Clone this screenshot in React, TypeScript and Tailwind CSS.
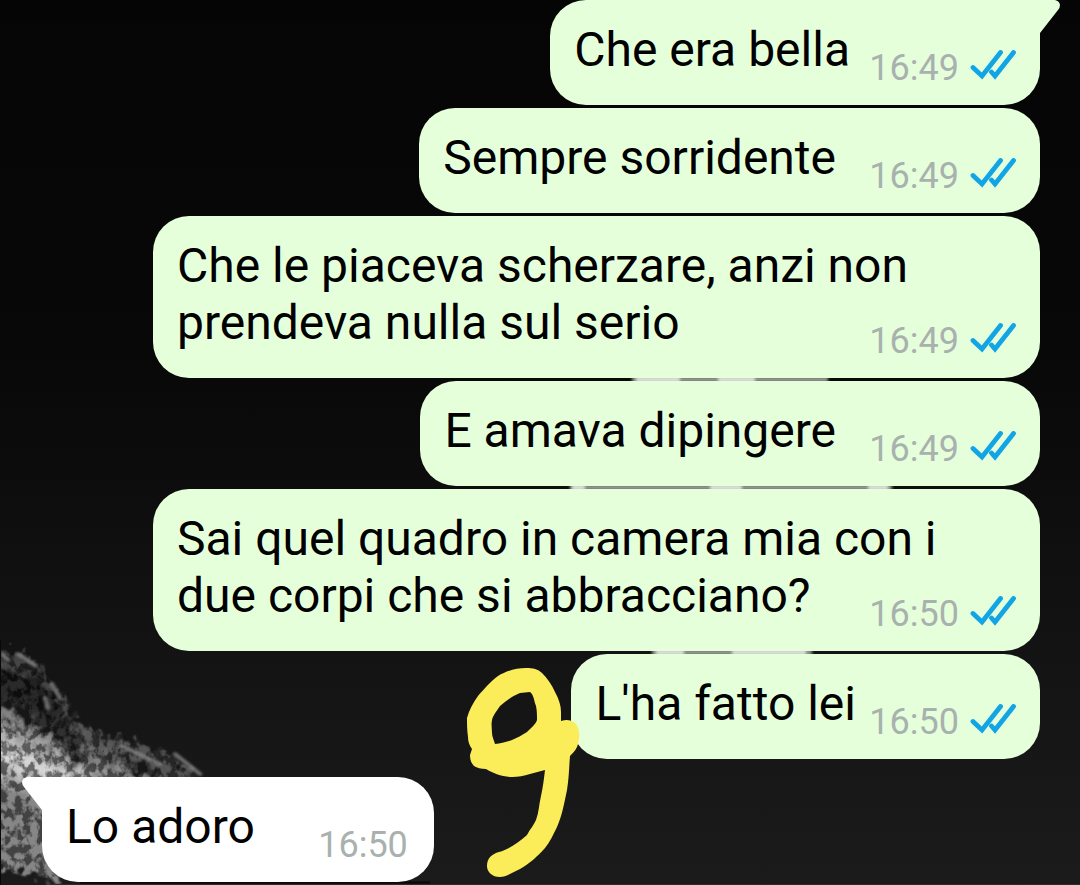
type Message = {
  text: string;
  time: string;
  sent: boolean;
  tail?: boolean;
  room: string;
};

const messages: Message[] = [
  { text: "Che era bella", time: "16:49", sent: true, tail: true, room: "pr-[166px]" },
  { text: "Sempre sorridente", time: "16:49", sent: true, room: "pr-[180px]" },
  { text: "Che le piaceva scherzare, anzi non prendeva nulla sul serio", time: "16:49", sent: true, room: "" },
  { text: "E amava dipingere", time: "16:49", sent: true, room: "pr-[180px]" },
  { text: "Sai quel quadro in camera mia con i due corpi che si abbracciano?", time: "16:50", sent: true, room: "" },
  { text: "L'ha fatto lei", time: "16:50", sent: true, room: "pr-[160px]" },
  { text: "Lo adoro", time: "16:50", sent: false, tail: true, room: "pr-[155px]" },
];

function ReadTicks() {
  return (
    <svg
      role="img"
      aria-label="Letto"
      className="mt-[3px] h-[30px] w-[46px]"
      viewBox="0 0 46 30"
      fill="none"
      stroke="#12a5e6"
      strokeWidth="4.8"
      strokeLinecap="round"
    >
      <path d="M3 17.5 L12 26 L30.5 2.5" />
      <path d="M21.5 22 L25 26 L43.5 2.5" />
    </svg>
  );
}

function Bubble({ message }: { message: Message }) {
  const { text, time, sent, tail, room } = message;
  const side = sent ? "self-end bg-[#e5ffdb]" : "mt-[15px] self-start bg-white";
  const corner = tail ? (sent ? "rounded-tr-none" : "rounded-tl-none") : "";
  return (
    <li className={`relative grid max-w-[887px] rounded-[36px] px-6 pt-[21px] pb-[27px] ${side} ${corner}`}>
      {tail && (
        <svg
          aria-hidden="true"
          viewBox="0 0 22 34"
          className={sent ? "absolute top-0 -right-[21px] h-[34px] w-[22px]" : "absolute top-0 -left-[21px] h-[34px] w-[22px] -scale-x-100"}
          fill={sent ? "#e5ffdb" : "#ffffff"}
        >
          <path d="M0 0 H16 Q20.5 1 21 5 Q21 7.5 19 10 L1 33 V34 H0 Z" />
        </svg>
      )}
      <p className={`[grid-area:1/1] text-[48px] leading-[57px] text-black ${room}`}>{text}</p>
      <div className={`-mb-[11px] flex items-start gap-[11px] self-end justify-self-end [grid-area:1/1] ${sent ? "" : "mr-0.5"}`}>
        <time className="text-[36px] leading-[42px] text-[#a9b1ae]">{time}</time>
        {sent && <ReadTicks />}
      </div>
    </li>
  );
}

function Wallpaper() {
  return (
    <svg aria-hidden="true" className="absolute inset-0 h-full w-full" viewBox="0 0 1080 885" preserveAspectRatio="xMinYMin slice">
      <defs>
        <linearGradient id="night" x1="0" y1="0" x2="0" y2="1">
          <stop offset="0" stopColor="#050505" />
          <stop offset="0.4" stopColor="#080808" />
          <stop offset="0.7" stopColor="#121212" />
          <stop offset="1" stopColor="#1b1b1b" />
        </linearGradient>
        <linearGradient id="slope" gradientUnits="userSpaceOnUse" x1="85" y1="680" x2="25" y2="800">
          <stop offset="0" stopColor="#383838" />
          <stop offset="0.4" stopColor="#585858" />
          <stop offset="0.56" stopColor="#8c8c8c" />
          <stop offset="0.75" stopColor="#d0d0d0" />
          <stop offset="1" stopColor="#808080" />
        </linearGradient>
        <filter id="rock" x="-10%" y="-10%" width="120%" height="120%">
          <feTurbulence type="fractalNoise" baseFrequency="0.13 0.11" numOctaves="3" seed="8" result="noise" />
          <feColorMatrix in="noise" type="matrix" values="5 0 0 0 -2  5 0 0 0 -2  5 0 0 0 -2  0 0 0 0 1" result="grain" />
          <feDisplacementMap in="SourceGraphic" in2="noise" scale="30" xChannelSelector="G" yChannelSelector="B" result="rough" />
          <feGaussianBlur in="rough" stdDeviation="1.2" result="smooth" />
          <feComposite in="smooth" in2="grain" operator="arithmetic" k1="0.85" k2="0.25" result="lit" />
          <feComposite in="lit" in2="smooth" operator="in" />
        </filter>
        <filter id="soft">
          <feGaussianBlur stdDeviation="1.6 0.8" />
        </filter>
      </defs>
      <rect width="1080" height="885" fill="url(#night)" />
      <g filter="url(#rock)">
        <path
          fill="url(#slope)"
          d="M-20 645 L22 652 L45 672 L62 695 L80 722 L104 735 L140 742 L170 754 L202 778 L190 800 L80 820 L60 884 L40 880 L12 872 L-20 864 Z"
        />
        <path fill="#0c0c0c" d="M-10 668 L40 676 L66 712 L86 752 L84 772 L50 734 L10 712 L-10 706 Z M120 752 L148 760 L164 776 L134 776 Z" opacity="0.6" />
      </g>
      <g fill="none" stroke="#858585" filter="url(#soft)" strokeWidth="4" strokeLinecap="round" opacity="0.8">
        <path d="M2 708 L24 728 M18 654 L36 666 M52 684 L60 698 M45 698 L48 708 M3 655 L8 660 M122 746 L160 764 M175 754 L200 774" />
      </g>
      <path d="M0 640 V885" stroke="#080808" strokeWidth="2" />
      <path d="M80 882.5 H430" stroke="#080808" strokeWidth="2" />
      <path d="M50 884.5 H1080" stroke="#2e2a2b" />
      <g filter="url(#soft)" fill="#8e938b">
        <path d="M632 377 H828 V382 H632 Z M570 485 H892 V490 H570 Z M652 650 H812 V655 H652 Z" />
      </g>
      <g filter="url(#soft)" fill="#d9ddd5">
        <path d="M636 377 H680 V382 H636 Z M718 377 H755 V382 H718 Z" />
        <path d="M572 485 H585 V490 H572 Z M710 485 H742 V490 H710 Z M868 485 H888 V490 H868 Z" />
        <path d="M656 650 H684 V655 H656 Z M732 650 H806 V655 H732 Z" />
      </g>
    </svg>
  );
}

function Scribble() {
  return (
    <svg aria-hidden="true" viewBox="0 0 114 210" className="absolute top-[668px] left-[466px] h-[210px] w-[114px]">
      <path
        fill="#fbec5a"
        fillRule="evenodd"
        d="M60 0 C67 0 72 1 76 5 C81 10 86 17 89 24 C93 31 95 38 95 44 L95 53 C101 51 105 52 109 55 C114 60 114 69 112 76 C111 81 107 85 104 88 C103 100 103 110 101 122 C98 136 96 148 91 159 C87 167 84 174 79 180 C72 188 63 196 54 201 C47 204 40 209 34 209 C26 209 21 204 21 198 C21 190 26 186 33 184 C44 181 53 174 61 167 C64 161 68 157 70 152 C73 144 73 136 75 128 C77 119 78 110 79 102 L64 106 C58 108 52 109 46 109 C36 109 27 105 20 101 C15 101 11 100 8 98 C5 95 4 91 4 87 L6 81 C3 77 2 73 2 69 C1 62 1 56 1 50 C3 42 7 35 12 28 C18 21 25 13 32 8 C40 3 50 0 60 0 Z M64 24 L54 25 C46 28 40 33 34 38 C31 43 27 47 26 52 C25 57 26 61 26 65 C26 69 28 72 29 76 C35 75 40 74 46 72 C51 70 56 67 61 64 C65 60 70 56 71 52 C71 47 71 43 70 38 C68 33 68 27 64 24 Z"
      />
    </svg>
  );
}

export default function App() {
  return (
    <main className="relative min-h-screen overflow-hidden bg-[#080808] font-['Roboto',sans-serif]">
      <Wallpaper />
      <ul className="relative flex flex-col gap-[3px] pr-10 pb-[3px] pl-[42px]">
        {messages.map((message) => (
          <Bubble key={message.text} message={message} />
        ))}
      </ul>
      <Scribble />
    </main>
  );
}
